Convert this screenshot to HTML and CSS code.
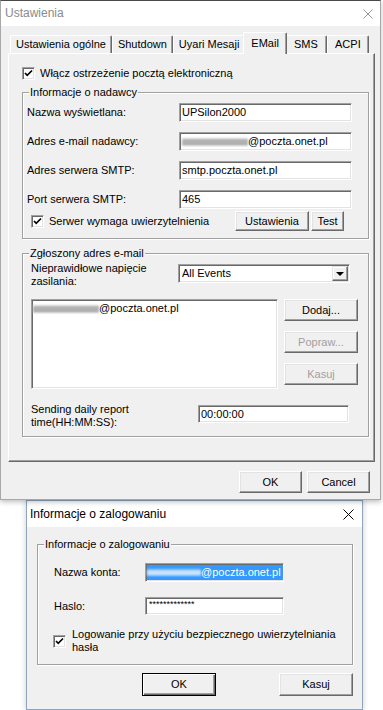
FILE: index.html
```html
<!DOCTYPE html>
<html lang="pl">
<head>
    <meta charset="UTF-8">
    <meta name="viewport" content="width=device-width, initial-scale=1.0">
    <title>Ustawienia</title>
    <link rel="stylesheet" href="styles.css">
</head>
<body>
    <div class="window main-window">
        <div class="titlebar">
            <span>Ustawienia</span>
            <svg class="close" width="10" height="10" viewBox="0 0 10 10"><path d="M0.5 0.5L9.5 9.5M9.5 0.5L0.5 9.5"/></svg>
        </div>

        <div class="main-body">
            <div class="tabs">
                <div class="tab">Ustawienia ogólne</div>
                <div class="tab">Shutdown</div>
                <div class="tab">Uyari Mesaji</div>
                <div class="tab active">EMail</div>
                <div class="tab">SMS</div>
                <div class="tab">ACPI</div>
            </div>

            <div class="panel">
                <label class="check top-check">
                    <span class="box"><svg width="9" height="9" viewBox="0 0 9 9"><polyline points="1,4 3.2,6.3 8,1.5"/></svg></span>
                    Włącz ostrzeżenie pocztą elektroniczną
                </label>

                <fieldset class="group">
                    <legend>Informacje o nadawcy</legend>
                    <div class="group-body sender">
                        <div class="form-grid">
                            <span>Nazwa wyświetlana:</span>
                            <div class="field">UPSilon2000</div>
                            <span>Adres e-mail nadawcy:</span>
                            <div class="field"><span class="smudge"></span>@poczta.onet.pl</div>
                            <span>Adres serwera SMTP:</span>
                            <div class="field">smtp.poczta.onet.pl</div>
                            <span>Port serwera SMTP:</span>
                            <div class="field">465</div>
                        </div>
                        <div class="auth-row">
                            <label class="check">
                                <span class="box"><svg width="9" height="9" viewBox="0 0 9 9"><polyline points="1,4 3.2,6.3 8,1.5"/></svg></span>
                                Serwer wymaga uwierzytelnienia
                            </label>
                            <button class="btn btn-settings">Ustawienia</button>
                            <button class="btn btn-test">Test</button>
                        </div>
                    </div>
                </fieldset>

                <fieldset class="group recipients">
                    <legend>Zgłoszony adres e-mail</legend>
                    <div class="group-body">
                        <div class="event-row">
                            <span class="wrap-label">Nieprawidłowe napięcie zasilania:</span>
                            <div class="field combo">
                                <span>All Events</span>
                                <span class="drop"><span class="arrow"></span></span>
                            </div>
                        </div>
                        <div class="list-row">
                            <div class="field listbox">
                                <div class="list-item"><span class="smudge"></span>@poczta.onet.pl</div>
                            </div>
                            <div class="list-buttons">
                                <button class="btn">Dodaj...</button>
                                <button class="btn" disabled>Popraw...</button>
                                <button class="btn" disabled>Kasuj</button>
                            </div>
                        </div>
                        <div class="report-row">
                            <span class="wrap-label report-label">Sending daily report time(HH:MM:SS):</span>
                            <div class="field time-field">00:00:00</div>
                        </div>
                    </div>
                </fieldset>
            </div>

            <div class="dialog-buttons">
                <button class="btn">OK</button>
                <button class="btn">Cancel</button>
            </div>
        </div>
    </div>

    <div class="window login-window">
        <div class="titlebar">
            <span>Informacje o zalogowaniu</span>
            <svg class="close" width="11" height="11" viewBox="0 0 11 11"><path d="M0.5 0.5L10.5 10.5M10.5 0.5L0.5 10.5"/></svg>
        </div>

        <div class="login-body">
            <fieldset class="group login-group">
                <legend>Informacje o zalogowaniu</legend>
                <div class="group-body">
                    <div class="login-grid">
                        <span>Nazwa konta:</span>
                        <div class="field account"><span class="selected"><span class="smudge blue"></span>@poczta.onet.pl</span></div>
                        <span>Haslo:</span>
                        <div class="field password">*************</div>
                    </div>
                    <label class="check login-check">
                        <span class="box"><svg width="9" height="9" viewBox="0 0 9 9"><polyline points="1,4 3.2,6.3 8,1.5"/></svg></span>
                        <span class="check-text">Logowanie przy użyciu bezpiecznego uwierzytelniania hasła</span>
                    </label>
                </div>
            </fieldset>

            <div class="login-buttons">
                <button class="btn default">OK</button>
                <button class="btn">Kasuj</button>
            </div>
        </div>
    </div>
</body>
</html>
```

FILE: styles.css
```css
* {
    box-sizing: border-box;
}

body {
    margin: 0;
    width: 383px;
    height: 710px;
    overflow: hidden;
    background-color: #fff;
    font-family: "Liberation Sans", Arial, sans-serif;
    font-size: 11px;
    line-height: 13px;
    color: #000;
}

.window {
    background-color: #f0f0f0;
    display: flex;
    flex-direction: column;
}

.main-window {
    width: 381px;
    height: 500px;
    border: 1px solid #a8a8a8;
    border-top-color: #4a4a4a;
    position: relative;
    z-index: 1;
    box-shadow: 0 2px 5px rgba(0,0,0,0.25);
}

.titlebar {
    height: 25px;
    background-color: #fff;
    display: flex;
    align-items: center;
    justify-content: space-between;
    padding: 0 7px 0 4px;
    font-size: 12px;
    flex-shrink: 0;
}

.main-window .titlebar {
    color: #8a8a8a;
}

.close path {
    stroke: #999;
    stroke-width: 1;
    fill: none;
}

.main-body {
    padding: 0 5px 0 7px;
    flex: 1;
}

/* tab strip */
.tabs {
    display: flex;
    align-items: flex-end;
    height: 27px;
    margin-left: 2px;
}

.tab {
    height: 18px;
    min-width: 42px;
    padding: 0 5px;
    text-align: center;
    line-height: 16px;
    border-top: 1px solid #fff;
    border-left: 1px solid #fff;
    border-right: 1px solid #696969;
    box-shadow: inset -1px 0 0 #a0a0a0;
    border-radius: 2px 2px 0 0;
}

.tab.active {
    height: 22px;
    margin: 0 -2px -1px;
    padding: 2px 7px 0;
    position: relative;
    z-index: 2;
    background-color: #f0f0f0;
}

.panel {
    height: 409px;
    border: 1px solid;
    border-color: #fff #696969 #696969 #fff;
    box-shadow: inset -1px -1px 0 #a0a0a0;
    padding: 13px 0 0 14px;
}

/* checkboxes */
.check {
    display: flex;
    align-items: center;
    gap: 5px;
}

.box {
    width: 13px;
    height: 13px;
    flex-shrink: 0;
    background: #fff;
    border: 1px solid;
    border-color: #a0a0a0 #fff #fff #a0a0a0;
    box-shadow: inset 1px 1px 0 #696969, inset -1px -1px 0 #e3e3e3;
    display: flex;
    align-items: center;
    justify-content: center;
}

.box polyline {
    fill: none;
    stroke: #000;
    stroke-width: 1.7;
}

.top-check {
    margin-bottom: 6px;
    margin-left: -1px;
}

/* group boxes */
.group {
    margin: 0;
    padding: 0;
    min-width: 0;
    width: 347px;
    border: 1px solid #a0a0a0;
    box-shadow: 1px 1px 0 #fff, inset 1px 1px 0 #fff;
    margin-left: -1px;
}

.group legend {
    padding: 0 1px;
    margin-left: 6px;
    background-color: #f0f0f0;
    line-height: 13px;
}

.group-body {
    padding: 2px 0 7px 8px;
}

.group-body.sender {
    padding: 4px 0 7px 4px;
}

.form-grid {
    display: grid;
    grid-template-columns: 152px 173px;
    row-gap: 10px;
    align-items: center;
}

.field {
    height: 19px;
    background: #fff;
    border: 1px solid;
    border-color: #a0a0a0 #fff #fff #a0a0a0;
    box-shadow: inset 1px 1px 0 #696969, inset -1px -1px 0 #e3e3e3;
    padding: 0 2px;
    line-height: 17px;
    white-space: nowrap;
    overflow: hidden;
}

.smudge {
    display: inline-block;
    width: 66px;
    height: 8px;
    vertical-align: -1px;
    background: linear-gradient(#ececec, #9a9a9a 35%, #c8c8c8 55%, #8c8c8c 75%, #efefef);
    filter: blur(0.8px);
}

.auth-row {
    display: flex;
    align-items: center;
    margin-top: 2px;
    height: 20px;
}

.auth-row .check {
    margin-left: 4px;
    width: 204px;
}

.btn {
    font: inherit;
    color: #000;
    background-color: #f0f0f0;
    border: 1px solid;
    border-color: #fff #696969 #696969 #fff;
    box-shadow: inset -1px -1px 0 #a0a0a0, inset 1px 1px 0 #e3e3e3;
    padding: 0;
    height: 22px;
}

.btn:disabled {
    color: #a0a0a0;
}

.btn-settings {
    width: 74px;
    height: 20px;
}

.btn-test {
    width: 33px;
    height: 20px;
    margin-left: 2px;
}

.recipients {
    margin-top: 8px;
}

.event-row {
    display: flex;
    align-items: flex-start;
}

.wrap-label {
    width: 130px;
}

.combo {
    margin-left: 17px;
    margin-top: 2px;
    width: 172px;
    display: flex;
    align-items: center;
    justify-content: space-between;
    padding: 0 1px 0 3px;
}

.drop {
    width: 16px;
    height: 15px;
    background-color: #f0f0f0;
    border: 1px solid;
    border-color: #e3e3e3 #696969 #696969 #e3e3e3;
    box-shadow: inset -1px -1px 0 #a0a0a0, inset 1px 1px 0 #fff;
    display: flex;
    align-items: center;
    justify-content: center;
}

.arrow {
    border-left: 4px solid transparent;
    border-right: 4px solid transparent;
    border-top: 4px solid #000;
}

.list-row {
    display: flex;
    gap: 6px;
    margin-top: 11px;
}

.listbox {
    width: 247px;
    height: 90px;
    padding: 2px 1px;
}

.list-item {
    line-height: 13px;
}

.list-buttons {
    display: flex;
    flex-direction: column;
    gap: 10px;
}

.list-buttons .btn {
    width: 74px;
}

.report-row {
    display: flex;
    align-items: flex-start;
    margin-top: 14px;
}

.report-label {
    width: 167px;
}

.time-field {
    width: 151px;
    height: 18px;
    margin-top: 2px;
    line-height: 16px;
}

.dialog-buttons {
    display: flex;
    justify-content: flex-end;
    gap: 5px;
    margin-top: 9px;
    padding-right: 5px;
}

.dialog-buttons .btn {
    width: 63px;
}

/* login dialog */
.login-window {
    width: 337px;
    height: 210px;
    margin-left: 26px;
    border: 1px solid #8fa5bd;
    box-shadow: 0 0 6px rgba(0,0,0,0.2);
}

.login-window .titlebar {
    height: 26px;
    padding: 0 8px 0 3px;
}

.login-window .close path {
    stroke: #000;
}

.login-body {
    padding: 11px 9px 0 10px;
}

.login-group {
    width: 316px;
    margin-left: 0;
}

.login-group .group-body {
    padding: 12px 0 10px 16px;
}

.login-grid {
    display: grid;
    grid-template-columns: 91px 139px;
    row-gap: 15px;
    align-items: center;
}

.account {
    padding: 1px 0 1px 1px;
}

.selected {
    display: block;
    height: 15px;
    line-height: 15px;
    background-color: #3399ff;
    color: #fff;
}

.smudge.blue {
    width: 54px;
    height: 7px;
    vertical-align: 0;
    background: linear-gradient(#6fb4ff, #e8f3ff 40%, #a9d3ff 60%, #eaf4ff 80%, #5aa8ff);
}

.password {
    height: 18px;
    font-size: 9px;
    line-height: 12px;
    padding-left: 3px;
}

.login-check {
    margin-top: 13px;
    margin-left: -1px;
    gap: 6px;
}

.check-text {
    width: 265px;
}

.login-buttons {
    display: flex;
    justify-content: flex-end;
    gap: 63px;
    margin-top: 8px;
}

.login-buttons .btn {
    width: 74px;
    height: 23px;
}

.btn.default {
    border: 1px solid #000;
    box-shadow: inset 1px 1px 0 #fff, inset -1px -1px 0 #696969, inset -2px -2px 0 #a0a0a0;
}
```
